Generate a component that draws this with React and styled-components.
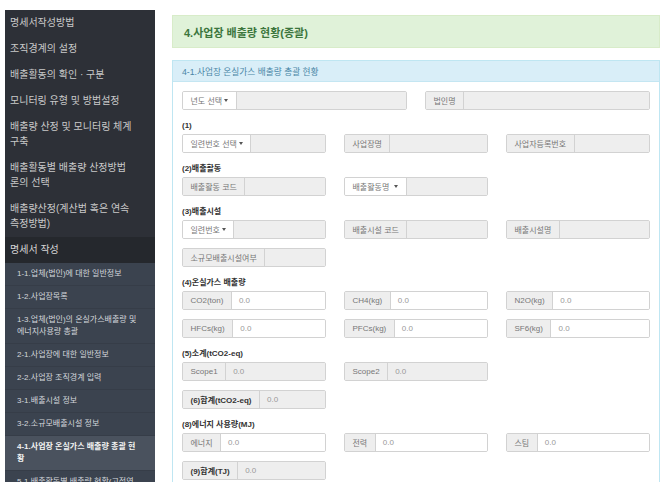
import styled, { createGlobalStyle } from 'styled-components';

const GlobalStyle = createGlobalStyle`
  html, body {
    margin: 0;
    padding: 0;
    background: #fff;
    font-family: "Liberation Sans", "Noto Sans CJK KR", sans-serif;
  }
`;

const Page = styled.div`
  display: flex;
  align-items: flex-start;
  height: 482px;
  overflow: hidden;
  padding-left: 5px;
`;

const Sidebar = styled.nav`
  width: 150px;
  flex-shrink: 0;
  margin-top: 10px;
  background: #2d3037;
`;

const TopItem = styled.div`
  padding: 5px 6px 6px 5px;
  font-size: 10px;
  line-height: 15px;
  color: ${(p) => (p.$heading ? '#d6d6d6' : '#c9c9c9')};
  background: ${(p) => (p.$heading ? '#25282d' : 'transparent')};
`;

const SubMenu = styled.div`
  background: #3b434f;
`;

const SubItem = styled.div`
  padding: 5px 6px 5px 12px;
  font-size: 8px;
  line-height: 12px;
  color: ${(p) => (p.$active ? '#f2f2f2' : '#d3d7dc')};
  font-weight: ${(p) => (p.$active ? 700 : 400)};
  background: ${(p) => (p.$active ? '#4a525e' : 'transparent')};
  border-bottom: 1px solid #363d48;
`;

const Main = styled.main`
  width: 488px;
  margin-left: 17px;
  padding-top: 15px;
`;

const PageHeader = styled.div`
  height: 33px;
  display: flex;
  align-items: center;
  padding: 0 11px;
  background: #e0f2d9;
  border: 1px solid #d8ecc9;
  box-sizing: border-box;
  color: #3c763d;
  font-size: 11px;
  font-weight: 700;
`;

const Panel = styled.section`
  margin-top: 12px;
  border: 1px solid #bfe6f2;
  border-bottom: none;
`;

const PanelHeading = styled.div`
  height: 20px;
  display: flex;
  align-items: center;
  padding: 0 9px;
  background: #d9eef8;
  border-bottom: 1px solid #c4e6f2;
  color: #4a86a6;
  font-size: 8.7px;
`;

const PanelBody = styled.div`
  padding: 9px 9px 40px;
  background: #fff;
`;

const Row = styled.div`
  display: grid;
  grid-template-columns: repeat(${(p) => p.$cols || 3}, 1fr);
  column-gap: 18px;
  margin-bottom: 9px;
`;

const SectionLabel = styled.div`
  font-size: 8px;
  line-height: 13px;
  font-weight: 700;
  color: #333;
  margin-bottom: 2px;
`;

const Group = styled.div`
  display: flex;
  height: 19px;
  border: 1px solid #d2d2d2;
  border-radius: 2px;
  box-sizing: border-box;
  overflow: hidden;
  box-shadow: inset 0 1px 1px rgba(0, 0, 0, 0.06);
  font-size: 8px;
`;

const Addon = styled.span`
  display: flex;
  align-items: center;
  gap: 2px;
  padding: 0 7.5px;
  white-space: nowrap;
  background: ${(p) => (p.$button ? '#fff' : '#eee')};
  border-right: 1px solid #d2d2d2;
  color: ${(p) => (p.$bold ? '#333' : '#777')};
  font-weight: ${(p) => (p.$bold ? 700 : 400)};
`;

const Caret = styled.span`
  display: inline-block;
  width: 0;
  height: 0;
  margin-left: ${(p) => (p.$spaced ? '3px' : '0')};
  border-top: 3px solid #555;
  border-left: 2.5px solid transparent;
  border-right: 2.5px solid transparent;
`;

const Field = styled.span`
  flex: 1;
  display: flex;
  align-items: center;
  padding: 0 7px;
  background: ${(p) => (p.$readOnly ? '#eee' : '#fff')};
  color: #999;
`;

const InputGroup = ({ label, value, readOnly, button, bold, spacedCaret }) => (
  <Group>
    <Addon $button={button} $bold={bold}>
      {label}
      {button && <Caret $spaced={spacedCaret} />}
    </Addon>
    <Field $readOnly={readOnly}>{value}</Field>
  </Group>
);

const topItems = [
  ['명세서작성방법'],
  ['조직경계의 설정'],
  ['배출활동의 확인 · 구분'],
  ['모니터링 유형 및 방법설정'],
  ['배출량 산정 및 모니터링 체계', '구축'],
  ['배출활동별 배출량 산정방법', '론의 선택'],
  ['배출량산정(계산법 혹은 연속', '측정방법)'],
];

const subItems = [
  ['1-1.업체(법인)에 대한 일반정보'],
  ['1-2.사업장목록'],
  ['1-3.업체(법인)의 온실가스배출량 및', '에너지사용량 총괄'],
  ['2-1.사업장에 대한 일반정보'],
  ['2-2.사업장 조직경계 입력'],
  ['3-1.배출시설 정보'],
  ['3-2.소규모배출시설 정보'],
  ['4-1.사업장 온실가스 배출량 총괄 현', '황'],
  ['5-1.배출활동별 배출량 현황(고정연', '소)'],
];

const Lines = ({ lines }) =>
  lines.map((l, i) => (
    <span key={i}>
      {i > 0 && <br />}
      {l}
    </span>
  ));

const App = () => {
  return (
    <>
      <GlobalStyle />
      <Page>
        <Sidebar>
          {topItems.map((lines, i) => (
            <TopItem key={i}>
              <Lines lines={lines} />
            </TopItem>
          ))}
          <TopItem $heading>명세서 작성</TopItem>
          <SubMenu>
            {subItems.map((lines, i) => (
              <SubItem key={i} $active={i === 7}>
                <Lines lines={lines} />
              </SubItem>
            ))}
          </SubMenu>
        </Sidebar>

        <Main>
          <PageHeader>4.사업장 배출량 현황(종괄)</PageHeader>

          <Panel>
            <PanelHeading>4-1.사업장 온실가스 배출량 총괄 현황</PanelHeading>
            <PanelBody>
              <Row $cols={2}>
                <InputGroup label="년도 선택" button readOnly />
                <InputGroup label="법인명" readOnly />
              </Row>

              <SectionLabel>(1)</SectionLabel>
              <Row>
                <InputGroup label="일련번호 선택" button readOnly />
                <InputGroup label="사업장명" readOnly />
                <InputGroup label="사업자등록번호" readOnly />
              </Row>

              <SectionLabel>(2)배출활동</SectionLabel>
              <Row>
                <InputGroup label="배출활동 코드" readOnly />
                <InputGroup label="배출활동명" button spacedCaret readOnly />
              </Row>

              <SectionLabel>(3)배출시설</SectionLabel>
              <Row>
                <InputGroup label="일련번호" button readOnly />
                <InputGroup label="배출시설 코드" readOnly />
                <InputGroup label="배출시설명" readOnly />
              </Row>
              <Row>
                <InputGroup label="소규모배출시설여부" readOnly />
              </Row>

              <SectionLabel>(4)온실가스 배출량</SectionLabel>
              <Row>
                <InputGroup label="CO2(ton)" value="0.0" />
                <InputGroup label="CH4(kg)" value="0.0" />
                <InputGroup label="N2O(kg)" value="0.0" />
              </Row>
              <Row>
                <InputGroup label="HFCs(kg)" value="0.0" />
                <InputGroup label="PFCs(kg)" value="0.0" />
                <InputGroup label="SF6(kg)" value="0.0" />
              </Row>

              <SectionLabel>(5)소계(tCO2-eq)</SectionLabel>
              <Row>
                <InputGroup label="Scope1" value="0.0" readOnly />
                <InputGroup label="Scope2" value="0.0" readOnly />
              </Row>
              <Row>
                <InputGroup label="(6)합계(tCO2-eq)" value="0.0" bold readOnly />
              </Row>

              <SectionLabel>(8)에너지 사용량(MJ)</SectionLabel>
              <Row>
                <InputGroup label="에너지" value="0.0" />
                <InputGroup label="전력" value="0.0" />
                <InputGroup label="스팀" value="0.0" />
              </Row>
              <Row>
                <InputGroup label="(9)합계(TJ)" value="0.0" bold readOnly />
              </Row>
            </PanelBody>
          </Panel>
        </Main>
      </Page>
    </>
  );
};

export default App;
